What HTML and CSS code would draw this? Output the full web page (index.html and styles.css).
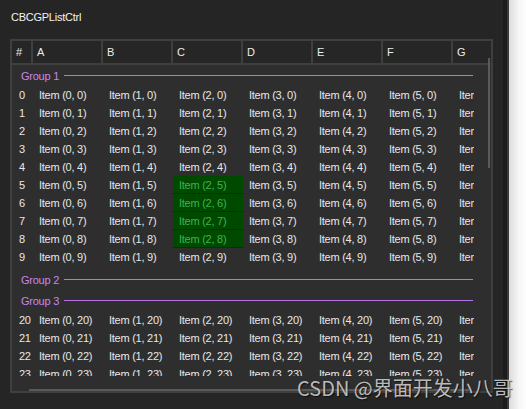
FILE: index.html
```html
<!DOCTYPE html>
<html>
<head>
<meta charset="utf-8">
<link rel="stylesheet" href="styles.css">
</head>
<body>
<div class="window">
  <div class="main">
    <div class="title">CBCGPListCtrl</div>
    <div class="list">
      <div class="header">
        <div class="hcell hnum">#</div>
        <div class="hcell">A</div>
        <div class="hcell">B</div>
        <div class="hcell">C</div>
        <div class="hcell">D</div>
        <div class="hcell">E</div>
        <div class="hcell">F</div>
        <div class="hcell hlast">G</div>
      </div>
      <div class="body">
        <div class="content">
          <div class="group"><span class="glabel">Group 1</span><span class="gline"></span></div>
          <div class="rows">
            <div class="row"><div class="num">0</div><div class="cell">Item (0, 0)</div><div class="cell">Item (1, 0)</div><div class="cell">Item (2, 0)</div><div class="cell">Item (3, 0)</div><div class="cell">Item (4, 0)</div><div class="cell">Item (5, 0)</div><div class="cell">Item (6, 0)</div></div>
            <div class="row"><div class="num">1</div><div class="cell">Item (0, 1)</div><div class="cell">Item (1, 1)</div><div class="cell">Item (2, 1)</div><div class="cell">Item (3, 1)</div><div class="cell">Item (4, 1)</div><div class="cell">Item (5, 1)</div><div class="cell">Item (6, 1)</div></div>
            <div class="row"><div class="num">2</div><div class="cell">Item (0, 2)</div><div class="cell">Item (1, 2)</div><div class="cell">Item (2, 2)</div><div class="cell">Item (3, 2)</div><div class="cell">Item (4, 2)</div><div class="cell">Item (5, 2)</div><div class="cell">Item (6, 2)</div></div>
            <div class="row"><div class="num">3</div><div class="cell">Item (0, 3)</div><div class="cell">Item (1, 3)</div><div class="cell">Item (2, 3)</div><div class="cell">Item (3, 3)</div><div class="cell">Item (4, 3)</div><div class="cell">Item (5, 3)</div><div class="cell">Item (6, 3)</div></div>
            <div class="row"><div class="num">4</div><div class="cell">Item (0, 4)</div><div class="cell">Item (1, 4)</div><div class="cell">Item (2, 4)</div><div class="cell">Item (3, 4)</div><div class="cell">Item (4, 4)</div><div class="cell">Item (5, 4)</div><div class="cell">Item (6, 4)</div></div>
            <div class="row"><div class="num">5</div><div class="cell">Item (0, 5)</div><div class="cell">Item (1, 5)</div><div class="cell sel">Item (2, 5)</div><div class="cell">Item (3, 5)</div><div class="cell">Item (4, 5)</div><div class="cell">Item (5, 5)</div><div class="cell">Item (6, 5)</div></div>
            <div class="row"><div class="num">6</div><div class="cell">Item (0, 6)</div><div class="cell">Item (1, 6)</div><div class="cell sel">Item (2, 6)</div><div class="cell">Item (3, 6)</div><div class="cell">Item (4, 6)</div><div class="cell">Item (5, 6)</div><div class="cell">Item (6, 6)</div></div>
            <div class="row"><div class="num">7</div><div class="cell">Item (0, 7)</div><div class="cell">Item (1, 7)</div><div class="cell sel">Item (2, 7)</div><div class="cell">Item (3, 7)</div><div class="cell">Item (4, 7)</div><div class="cell">Item (5, 7)</div><div class="cell">Item (6, 7)</div></div>
            <div class="row"><div class="num">8</div><div class="cell">Item (0, 8)</div><div class="cell">Item (1, 8)</div><div class="cell sel">Item (2, 8)</div><div class="cell">Item (3, 8)</div><div class="cell">Item (4, 8)</div><div class="cell">Item (5, 8)</div><div class="cell">Item (6, 8)</div></div>
            <div class="row"><div class="num">9</div><div class="cell">Item (0, 9)</div><div class="cell">Item (1, 9)</div><div class="cell">Item (2, 9)</div><div class="cell">Item (3, 9)</div><div class="cell">Item (4, 9)</div><div class="cell">Item (5, 9)</div><div class="cell">Item (6, 9)</div></div>
          </div>
          <div class="group"><span class="glabel">Group 2</span><span class="gline"></span></div>
          <div class="group"><span class="glabel">Group 3</span><span class="gline"></span></div>
          <div class="rows">
            <div class="row"><div class="num">20</div><div class="cell">Item (0, 20)</div><div class="cell">Item (1, 20)</div><div class="cell">Item (2, 20)</div><div class="cell">Item (3, 20)</div><div class="cell">Item (4, 20)</div><div class="cell">Item (5, 20)</div><div class="cell">Item (6, 20)</div></div>
            <div class="row"><div class="num">21</div><div class="cell">Item (0, 21)</div><div class="cell">Item (1, 21)</div><div class="cell">Item (2, 21)</div><div class="cell">Item (3, 21)</div><div class="cell">Item (4, 21)</div><div class="cell">Item (5, 21)</div><div class="cell">Item (6, 21)</div></div>
            <div class="row"><div class="num">22</div><div class="cell">Item (0, 22)</div><div class="cell">Item (1, 22)</div><div class="cell">Item (2, 22)</div><div class="cell">Item (3, 22)</div><div class="cell">Item (4, 22)</div><div class="cell">Item (5, 22)</div><div class="cell">Item (6, 22)</div></div>
            <div class="row"><div class="num">23</div><div class="cell">Item (0, 23)</div><div class="cell">Item (1, 23)</div><div class="cell">Item (2, 23)</div><div class="cell">Item (3, 23)</div><div class="cell">Item (4, 23)</div><div class="cell">Item (5, 23)</div><div class="cell">Item (6, 23)</div></div>
            <div class="row"><div class="num">24</div><div class="cell">Item (0, 24)</div><div class="cell">Item (1, 24)</div><div class="cell">Item (2, 24)</div><div class="cell">Item (3, 24)</div><div class="cell">Item (4, 24)</div><div class="cell">Item (5, 24)</div><div class="cell">Item (6, 24)</div></div>
          </div>
        </div>
        <div class="vscroll"></div>
      </div>
      <div class="hscroll"></div>
      <div class="vthumb"></div>
      <div class="hthumb"></div>
    </div>
  </div>
  <div class="edge-dark"></div>
  <div class="edge-line"></div>
  <div class="edge-light"></div>
  <div class="watermark">CSDN @界面开发小八哥</div>
</div>
</body>
</html>
```
FILE: styles.css
```css
html, body {
  margin: 0;
  padding: 0;
}
body {
  background: #252525;
  font-family: "Liberation Sans", Arial, sans-serif;
  font-size: 11px;
  letter-spacing: -0.25px;
  color: #e8e8e8;
}
.window {
  position: relative;
  display: flex;
  width: 526px;
  height: 409px;
  overflow: hidden;
}
.main {
  width: 503px;
  flex: none;
  background: #252525;
}
.title {
  padding: 11px 0 0 11px;
  height: 13px;
  line-height: 13px;
  color: #f2f2f2;
}
.list {
  position: relative;
  box-sizing: border-box;
  margin: 15px 0 0 10px;
  width: 483px;
  height: 354px;
  border: 2px solid #3f3f3f;
  background: #2e2e2e;
}
.header {
  display: flex;
  height: 22px;
  border-bottom: 2px solid #3f3f3f;
  background: #262626;
}
.hcell {
  flex: none;
  width: 64px;
  padding-left: 4px;
  line-height: 22px;
  border-right: 2px solid #3f3f3f;
  color: #ececec;
}
.hcell.hnum {
  width: 15px;
}
.hcell.hlast {
  flex: 1;
  border-right: none;
}
.body {
  display: flex;
  height: 311px;
}
.content {
  width: 462px;
  flex: none;
  overflow: hidden;
}
.vscroll {
  flex: 1;
  background: #2e2e2e;
}
.group {
  display: flex;
  align-items: center;
  height: 21px;
  padding-left: 9px;
  margin-right: 1px;
}
.glabel {
  color: #c487f2;
}
.gline {
  flex: 1;
  height: 1px;
  margin-left: 5px;
  background: #b672e6;
}
.rows {
  margin-bottom: 3px;
}
.row {
  display: flex;
  height: 18px;
  line-height: 18px;
  white-space: nowrap;
}
.num {
  flex: none;
  width: 14px;
  padding-left: 7px;
}
.cell {
  flex: none;
  width: 64px;
  padding-left: 6px;
  overflow: hidden;
}
.cell.sel {
  background: #004a00;
  color: #3ab552;
  box-shadow: inset 0 -1px 0 #003600;
}
.hscroll {
  height: 15px;
  background: #2e2e2e;
}
.vthumb {
  position: absolute;
  left: 476px;
  top: 17px;
  width: 2px;
  height: 110px;
  background: #5a5a5a;
}
.hthumb {
  position: absolute;
  left: 17px;
  bottom: 0;
  width: 440px;
  height: 2px;
  background: #5a5a5a;
}
.edge-dark {
  width: 4px;
  flex: none;
  background: #1c1c1c;
}
.edge-line {
  width: 2px;
  flex: none;
  background: #3a3a3a;
}
.edge-light {
  flex: 1;
  background: linear-gradient(to right, #dcdcdc, #f7f7f7 60%, #fdfdfd);
}
.watermark {
  position: absolute;
  left: 297px;
  top: 375px;
  font-family: "Noto Sans CJK SC", "Liberation Sans", sans-serif;
  font-size: 20px;
  letter-spacing: 0;
  line-height: 26px;
  color: rgba(215, 215, 215, 0.85);
  text-shadow: 1px 1px 1px rgba(0, 0, 0, 0.6);
  white-space: nowrap;
}
```
